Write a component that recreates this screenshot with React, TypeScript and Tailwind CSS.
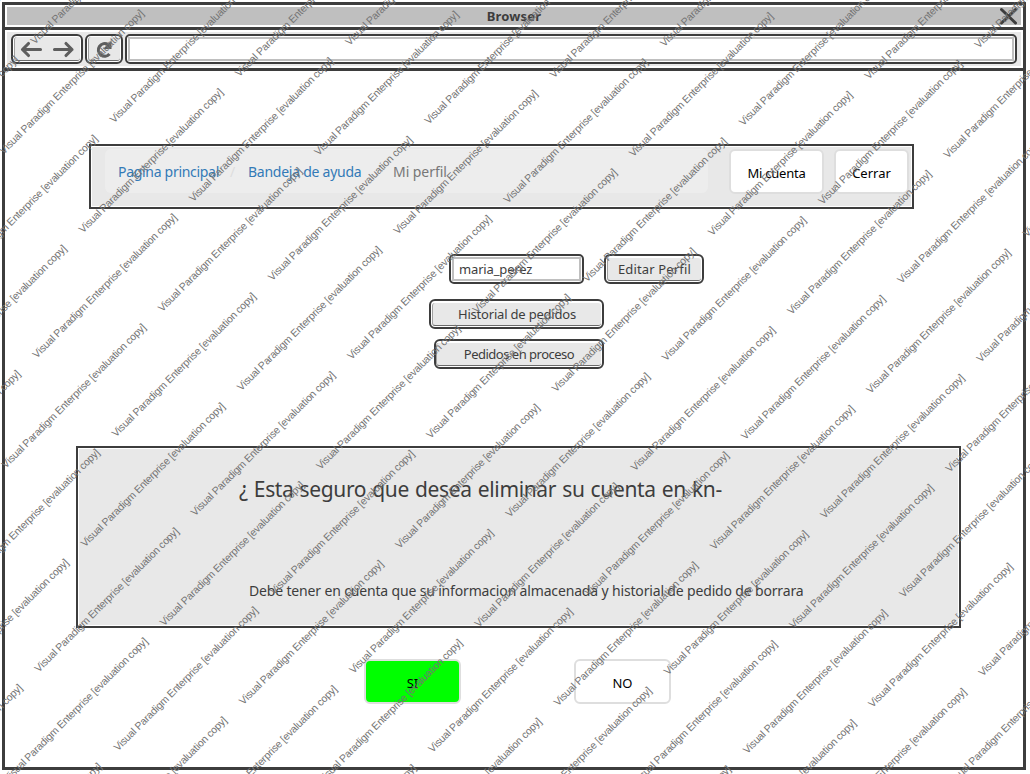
import type { ReactNode } from "react";

const WATERMARK = "Visual Paradigm Enterprise [evaluation copy]";

function watermarkPoints() {
  const points: { x: number; y: number }[] = [];
  for (let k = -5; k < 24; k++) {
    const sum = 235 + 79 * k;
    const base = 113 - 38.6 * k + (k % 2 !== 0 ? 7.6 : 0);
    for (let n = -4; n < 16; n++) {
      const x = base + 156.35 * n;
      const y = sum - x;
      if (x > -138 && x < 1026 && y > 4 && y < 912) points.push({ x, y });
    }
  }
  return points;
}

function Watermark() {
  return (
    <svg className="pointer-events-none absolute inset-0 h-[774px] w-[1030px]" viewBox="0 0 1030 774">
      {watermarkPoints().map((p, i) => (
        <text
          key={i}
          transform={`translate(${p.x + 1} ${p.y + 1.5}) rotate(-45)`}
          textLength={199}
          className="fill-[#747474] font-['Liberation_Sans',sans-serif] text-[10.5px]"
        >
          {WATERMARK}
        </text>
      ))}
    </svg>
  );
}

function SketchButton({ className, children }: { className: string; children: ReactNode }) {
  return (
    <button className={`h-[30px] rounded-[6px] border-2 border-[#3d3d3d] bg-white p-px ${className}`}>
      <span className="flex h-full items-center justify-center rounded-[3px] border-b border-l border-b-[#6b6b6b] border-l-[#a0a0a0] bg-[#e8e8e8] whitespace-nowrap">
        {children}
      </span>
    </button>
  );
}

function PlainButton({ className, children }: { className: string; children: ReactNode }) {
  return (
    <button className={`flex h-[45px] items-center justify-center rounded-[6px] border-2 border-[#dedede] pt-[3px] text-black ${className}`}>
      {children}
    </button>
  );
}

export default function App() {
  return (
    <div className="relative h-[774px] w-[1030px] overflow-hidden bg-white p-[2px] font-['Comic_Sans_MS','Noto_Sans',sans-serif] text-[13px] leading-none text-[#3d3d3d]">
      <div className="h-[768px] w-[1024px] border-[3px] border-[#3d3d3d] bg-white">
        <header className="h-[25px] border-b-[3px] border-[#3d3d3d] p-[2px]">
          <div className="relative flex h-[18px] items-center justify-center bg-[#bfbfbf] pt-px font-bold">
            <span className="tracking-[0.15px]">Browser</span>
            <svg className="absolute top-0 right-[3px] h-[18px] w-[18px]" viewBox="0 0 18 18" fill="none" stroke="#3d3d3d" strokeWidth="3" strokeLinecap="round">
              <path d="M1.500 2.500 15.500 16M15.500 2.500 1.500 16" />
            </svg>
          </div>
        </header>
        <div className="h-[41px] border-b-[3px] border-[#3d3d3d] p-[2px]">
          <div className="flex h-[34px] gap-[2px] bg-[#e8e8e8] px-1 pt-[2px]">
            <SketchButton className="w-[72px]">
              <svg className="h-[20px] w-[56px]" viewBox="0 0 56 20" fill="none" stroke="#5e5e5e" strokeWidth="3.1" strokeLinecap="round" strokeLinejoin="round">
                <path d="M20.500 10.500H2.500M8.500 4.500 2.500 10.500l6 6M34.500 10.500H52M46 4.500l6 6-6 6" />
              </svg>
            </SketchButton>
            <SketchButton className="w-[38px]">
              <svg className="h-[20px] w-[20px]" viewBox="0 0 20 20" fill="none" stroke="#5e5e5e" strokeWidth="3.2">
                <path d="M14.500 15A6.300 6.300 0 1 1 13 5.500" />
                <path d="M16.500 1.500v8.500H8Z" fill="#5e5e5e" stroke="none" />
              </svg>
            </SketchButton>
            <div className="h-[30px] w-[892px] rounded-[5px] border-2 border-[#3d3d3d] bg-white p-px">
              <div className="h-full border-2 border-[#bfbfbf]" />
            </div>
          </div>
        </div>

        <main className="flex flex-col">
          <nav className="mt-[73px] ml-[84px] h-[65px] w-[825px] border-2 border-[#3d3d3d] p-px">
            <div className="flex h-full bg-[#e8e8e8] pt-[2px] pl-[13px]">
              <div className="flex h-[44px] w-[603px] items-center rounded-[6px] bg-[#ededed] pt-[2px] pl-[13px] text-[14px] whitespace-nowrap text-[#337ab7]">
                <a className="w-[112px] tracking-[-0.3px]">Pagina principal</a>
                <span className="w-[18px] text-[#dddddd]">/</span>
                <a className="w-[127px] tracking-[-0.25px]">Bandeja de ayuda</a>
                <span className="w-[18px] text-[#dddddd]">/</span>
                <span className="tracking-[-0.05px] text-[#777777]">Mi perfil</span>
              </div>
              <PlainButton className="ml-[21px] w-[95px] bg-white tracking-[-0.25px]">Mi cuenta</PlainButton>
              <PlainButton className="ml-[10px] w-[75px] bg-white tracking-[0px]">Cerrar</PlainButton>
            </div>
          </nav>

          <section className="mt-[45px] ml-[424px] flex w-[280px] flex-col">
            <div className="flex gap-[20px] pl-[20px]">
              <div className="h-[30px] w-[135px] rounded-[5px] border-2 border-[#3d3d3d] p-px">
                <div className="flex h-full items-center border-2 border-[#bfbfbf] pl-[5px] tracking-[-0.15px]">maria_perez</div>
              </div>
              <SketchButton className="w-[100px] pt-[2px] tracking-[0.15px]">Editar Perfil</SketchButton>
            </div>
            <SketchButton className="mt-[15px] w-[175px] pt-[2px] tracking-[-0.2px]">Historial de pedidos</SketchButton>
            <SketchButton className="mt-[10px] ml-[5px] w-[170px] pt-[2px] pl-0 tracking-[-0.5px]">Pedidos en proceso</SketchButton>
          </section>

          <section className="mt-[77px] ml-[71px] h-[182px] w-[885px] border-2 border-[#3d3d3d] p-px whitespace-nowrap">
            <div className="h-full bg-[#e8e8e8] pt-[28px]">
              <h1 className="ml-[160px] text-[21px] leading-[24px] tracking-[-0.36px] [word-spacing:1px]">¿ Esta seguro que desea eliminar su cuenta en kn-</h1>
              <p className="mt-[81px] ml-[170px] text-[14px] leading-[18px] tracking-[-0.16px]">
                Debe tener en cuenta que su informacion almacenada y historial de pedido de borrara
              </p>
            </div>
          </section>

          <div className="mt-[31px] ml-[359px] flex gap-[113px]">
            <PlainButton className="w-[97px] bg-[#00ff00]">SI</PlainButton>
            <PlainButton className="w-[97px] bg-white">NO</PlainButton>
          </div>
        </main>
      </div>
      <Watermark />
    </div>
  );
}
